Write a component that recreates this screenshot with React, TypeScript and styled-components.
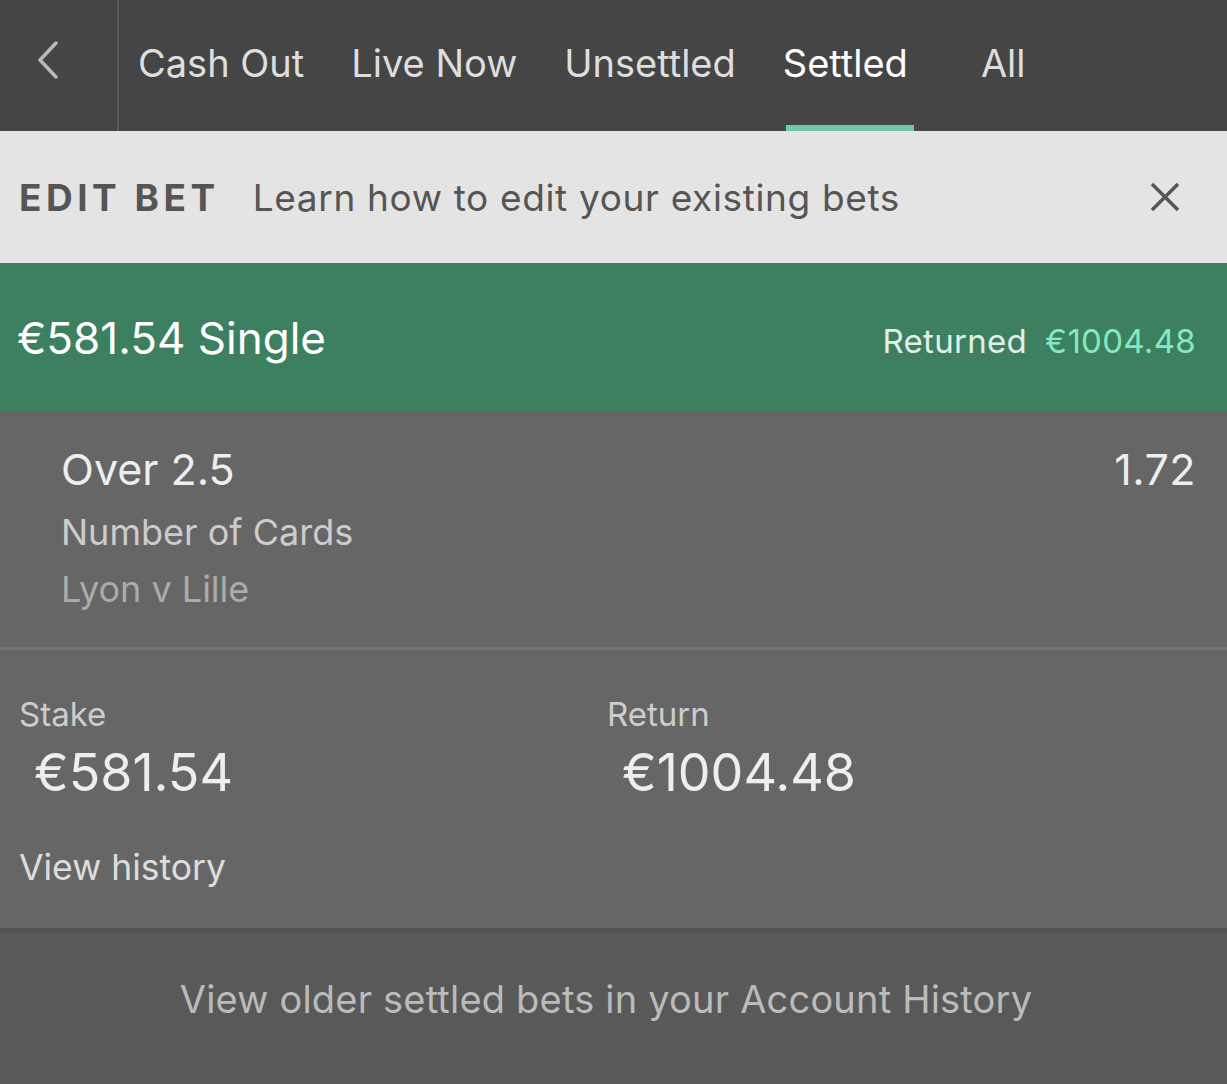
import styled, { createGlobalStyle } from 'styled-components';

const GlobalStyle = createGlobalStyle`
  html, body {
    margin: 0;
    padding: 0;
    background: #595959;
  }
  body {
    font-family: Inter, "Noto Sans", "DejaVu Sans", sans-serif;
    -webkit-font-smoothing: antialiased;
  }
`;

const tabs = ['Cash Out', 'Live Now', 'Unsettled', 'Settled', 'All'];

function BackIcon() {
  return (
    <svg width="24" height="40" viewBox="0 0 24 40">
      <path
        d="M20 3 L4 20 L20 37"
        fill="none"
        stroke="#bababa"
        strokeWidth="3.5"
        strokeLinecap="round"
        strokeLinejoin="round"
      />
    </svg>
  );
}

function CloseIcon() {
  return (
    <svg width="32" height="32" viewBox="0 0 32 32">
      <path
        d="M3 3 L29 29 M29 3 L3 29"
        fill="none"
        stroke="#555555"
        strokeWidth="3.5"
      />
    </svg>
  );
}

export default function App() {
  return (
    <Page>
      <GlobalStyle />
      <NavBar>
        <BackButton>
          <BackIcon />
        </BackButton>
        <Tabs>
          {tabs.map((t) => (
            <Tab key={t} $active={t === 'Settled'} $wide={t === 'All'}>
              {t}
            </Tab>
          ))}
        </Tabs>
      </NavBar>

      <Banner>
        <BannerTitle>EDIT BET</BannerTitle>
        <BannerText>Learn how to edit your existing bets</BannerText>
        <CloseButton>
          <CloseIcon />
        </CloseButton>
      </Banner>

      <BetHeader>
        <BetTitle>€581.54 Single</BetTitle>
        <Returned>
          <ReturnedLabel>Returned</ReturnedLabel>
          <ReturnedValue>€1004.48</ReturnedValue>
        </Returned>
      </BetHeader>

      <Selection>
        <SelectionInfo>
          <SelectionName>Over 2.5</SelectionName>
          <Market>Number of Cards</Market>
          <EventName>Lyon v Lille</EventName>
        </SelectionInfo>
        <Odds>1.72</Odds>
      </Selection>

      <Summary>
        <SummaryGrid>
          <SummaryCell>
            <SummaryLabel>Stake</SummaryLabel>
            <SummaryValue>€581.54</SummaryValue>
          </SummaryCell>
          <SummaryCell>
            <SummaryLabel>Return</SummaryLabel>
            <SummaryValue>€1004.48</SummaryValue>
          </SummaryCell>
        </SummaryGrid>
        <HistoryLink>View history</HistoryLink>
      </Summary>

      <Footer>
        <FooterText>View older settled bets in your Account History</FooterText>
      </Footer>
    </Page>
  );
}

const Page = styled.div`
  width: 1227px;
  min-height: 1084px;
  display: flex;
  flex-direction: column;
  background: #595959;
`;

const NavBar = styled.div`
  display: flex;
  height: 131px;
  background: #454545;
`;

const BackButton = styled.div`
  width: 119px;
  padding: 40px 0 0 36px;
  box-sizing: border-box;
  border-right: 2px solid #585858;
`;

const Tabs = styled.div`
  display: flex;
  align-items: stretch;
  gap: 47px;
  padding-left: 19px;
`;

const Tab = styled.div<{ $active?: boolean; $wide?: boolean }>`
  position: relative;
  padding-top: 40px;
  margin-left: ${(p) => (p.$wide ? '26px' : '0')};
  font-size: 38px;
  line-height: 46px;
  color: ${(p) => (p.$active ? '#ffffff' : '#dedede')};

  &::after {
    content: '';
    display: ${(p) => (p.$active ? 'block' : 'none')};
    position: absolute;
    left: 3px;
    width: 128px;
    bottom: 0;
    height: 6px;
    background: #73c8a6;
  }
`;

const Banner = styled.div`
  height: 132px;
  display: flex;
  align-items: center;
  background: #e4e4e4;
  padding: 0 46px 0 19px;
  box-sizing: border-box;
  color: #555555;
`;

const BannerTitle = styled.div`
  font-size: 37px;
  font-weight: 700;
  letter-spacing: 4.5px;
  margin-right: 33px;
`;

const BannerText = styled.div`
  flex: 1;
  font-size: 37px;
  letter-spacing: 0.65px;
`;

const CloseButton = styled.div`
  display: flex;
  align-items: center;
`;

const BetHeader = styled.div`
  height: 149px;
  display: flex;
  align-items: center;
  justify-content: space-between;
  padding: 0 31px 0 17px;
  background: #3d8060;
`;

const BetTitle = styled.div`
  font-size: 44px;
  color: #ffffff;
`;

const Returned = styled.div`
  display: flex;
  gap: 18px;
  padding-top: 7px;
  font-size: 33px;
  letter-spacing: 0.3px;
`;

const ReturnedLabel = styled.span`
  color: #e2efe8;
`;

const ReturnedValue = styled.span`
  color: #84e8c3;
`;

const Selection = styled.div`
  display: flex;
  justify-content: space-between;
  align-items: flex-start;
  padding: 32px 31px 0 61px;
  height: 238px;
  box-sizing: border-box;
  background: #666666;
  border-bottom: 3px solid #737373;
`;

const SelectionInfo = styled.div`
  display: flex;
  flex-direction: column;
`;

const SelectionName = styled.div`
  font-size: 43px;
  line-height: 50px;
  color: #eeeeee;
`;

const Market = styled.div`
  font-size: 36px;
  line-height: 44px;
  color: #cccccc;
  margin-top: 16px;
`;

const EventName = styled.div`
  font-size: 36px;
  line-height: 44px;
  color: #ababab;
  margin-top: 13px;
`;

const Odds = styled.div`
  font-size: 43px;
  line-height: 50px;
  letter-spacing: 0.5px;
  color: #eeeeee;
`;

const Summary = styled.div`
  height: 278px;
  box-sizing: border-box;
  padding: 44px 19px 0;
  background: #666666;
`;

const SummaryGrid = styled.div`
  display: grid;
  grid-template-columns: 588px 1fr;
`;

const SummaryCell = styled.div`
  display: flex;
  flex-direction: column;
`;

const SummaryLabel = styled.div`
  font-size: 33px;
  line-height: 40px;
  color: #cdcdcd;
`;

const SummaryValue = styled.div`
  font-size: 52px;
  line-height: 64px;
  color: #eeeeee;
  margin: 7px 0 0 15px;
`;

const HistoryLink = styled.div`
  font-size: 35.5px;
  line-height: 44px;
  color: #dddddd;
  margin-top: 41px;
`;

const Footer = styled.div`
  flex: 1;
  display: flex;
  justify-content: center;
  align-items: flex-start;
  padding: 43px 15px 0 0;
  background: #595959;
  border-top: 5px solid #525252;
`;

const FooterText = styled.div`
  font-size: 38px;
  line-height: 46px;
  letter-spacing: 0.2px;
  color: #bbbbbb;
`;
